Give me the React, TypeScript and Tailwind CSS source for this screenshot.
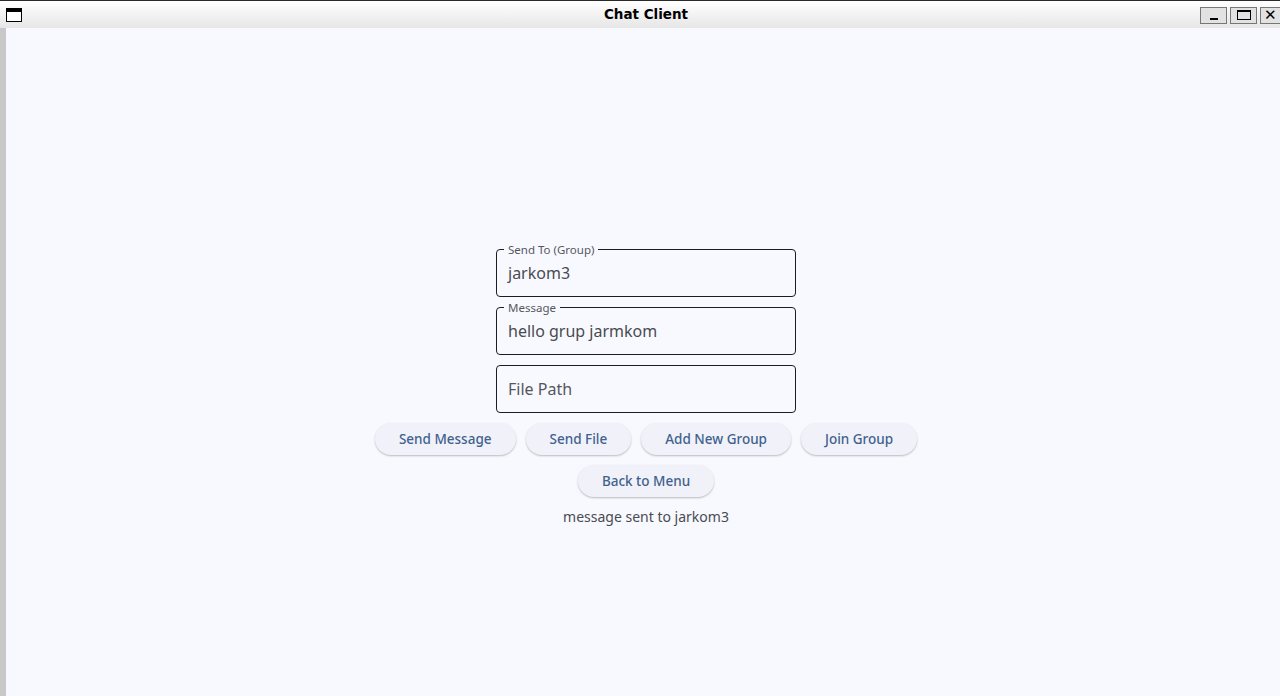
import React from "react";

const Field = ({ label, value, placeholder }: { label?: string; value?: string; placeholder?: string }) => (
  <div className="relative h-[48px] w-[300px] rounded-[4px] border border-[#1d1d21] flex items-center px-[11px]">
    {label && (
      <span className="absolute left-[7px] top-[-7px] bg-[#f8f9ff] px-[4px] text-[11.5px] leading-[14px] text-[#56585e]">
        {label}
      </span>
    )}
    {value ? (
      <span className="text-[16px] text-[#4a4b50]">{value}</span>
    ) : (
      <span className="text-[16px] text-[#55575c]">{placeholder}</span>
    )}
  </div>
);

const Btn = ({ children }: { children: React.ReactNode }) => (
  <button className="h-[32px] rounded-full bg-[#f1f2f9] px-[24px] text-[13.5px] font-medium text-[#41618f] shadow-[0_1px_2px_rgba(0,0,0,0.25)]">
    {children}
  </button>
);

const App = () => {
  return (
    <div className="h-[696px] w-[1280px] overflow-hidden bg-[#f8f9ff] font-['Noto_Sans',sans-serif]">
      {/* title bar */}
      <div className="relative flex h-[28px] items-center border-t border-[#2a2a2a] bg-gradient-to-b from-white to-[#e6e6e6] font-['DejaVu_Sans',sans-serif]">
        <div className="ml-[6px] h-[14px] w-[16px] border-[1.5px] border-black border-t-[4px] bg-white" />
        <div className="absolute inset-0 flex items-center justify-center pl-[12px] text-[13.5px] font-bold text-black">
          Chat Client
        </div>
        <div className="relative ml-auto mt-[1px] flex gap-[3px]">
          <div className="flex h-[17px] w-[27px] items-end justify-center border border-[#777] bg-[#e2e2e2] pb-[3px]">
            <div className="h-[2px] w-[8px] bg-black" />
          </div>
          <div className="flex h-[17px] w-[27px] items-center justify-center border border-[#777] bg-[#e2e2e2]">
            <div className="h-[10px] w-[14px] border border-black border-t-2" />
          </div>
          <div className="flex h-[17px] w-[20px] items-center justify-start border border-r-0 border-[#777] bg-[#e2e2e2] pl-[3px] text-[15px] font-bold leading-none text-black">
            ✕
          </div>
        </div>
      </div>
      {/* body */}
      <div className="flex h-[668px]">
        <div className="w-[6px] shrink-0 bg-[#c8c8c8]" />
        <div className="flex w-[1280px] shrink-0 flex-col items-center pt-[221px]">
          <div className="flex flex-col gap-[10px]">
            <Field label="Send To (Group)" value="jarkom3" />
            <Field label="Message" value="hello grup jarmkom" />
            <Field placeholder="File Path" />
          </div>
          <div className="mt-[10px] flex gap-[10px]">
            <Btn>Send Message</Btn>
            <Btn>Send File</Btn>
            <Btn>Add New Group</Btn>
            <Btn>Join Group</Btn>
          </div>
          <div className="mt-[10px]">
            <Btn>Back to Menu</Btn>
          </div>
          <div className="mt-[9px] text-[14px] text-[#4a4b50]">message sent to jarkom3</div>
        </div>
      </div>
    </div>
  );
};

export default App;
